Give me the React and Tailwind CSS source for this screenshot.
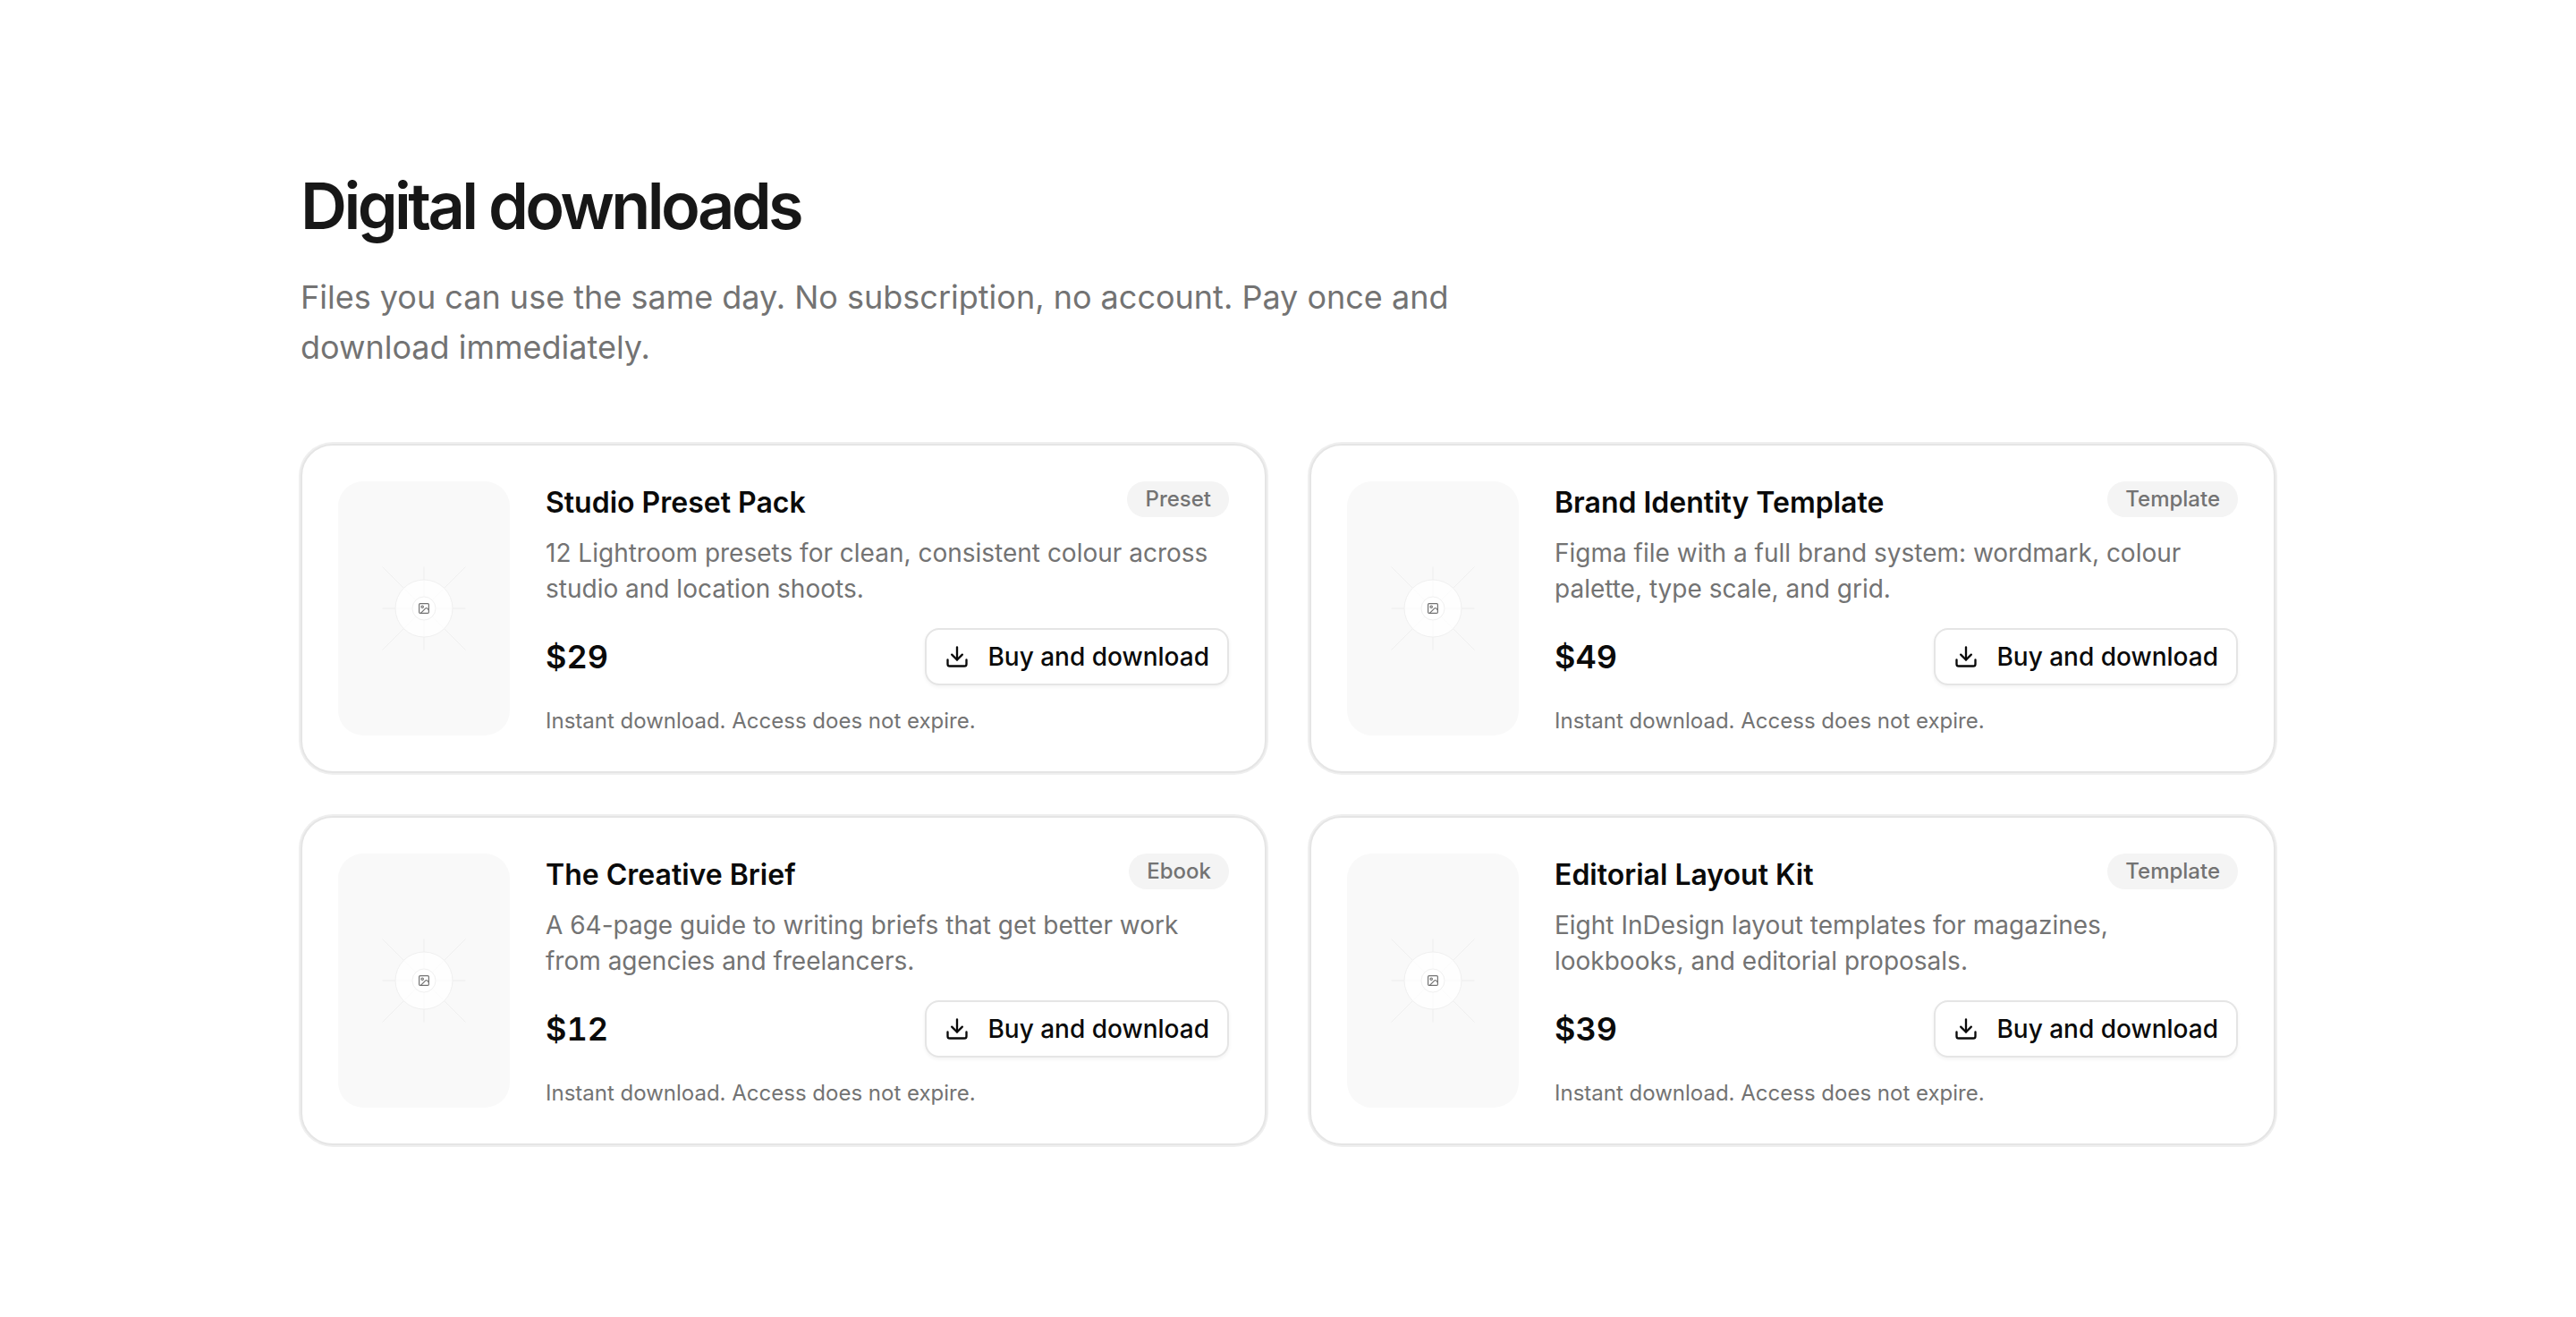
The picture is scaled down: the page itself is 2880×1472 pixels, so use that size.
import { Download } from "lucide-react";

const products = [
  {
    title: "Studio Preset Pack",
    kind: "Preset",
    text: "12 Lightroom presets for clean, consistent colour across studio and location shoots.",
    price: "$29",
  },
  {
    title: "Brand Identity Template",
    kind: "Template",
    text: "Figma file with a full brand system: wordmark, colour palette, type scale, and grid.",
    price: "$49",
  },
  {
    title: "The Creative Brief",
    kind: "Ebook",
    text: "A 64-page guide to writing briefs that get better work from agencies and freelancers.",
    price: "$12",
  },
  {
    title: "Editorial Layout Kit",
    kind: "Template",
    text: "Eight InDesign layout templates for magazines, lookbooks, and editorial proposals.",
    price: "$39",
  },
];

function Placeholder() {
  return (
    <div className="flex w-48 shrink-0 items-center justify-center rounded-[28px] bg-[#f9f9f9]">
      <svg width="94" height="94" viewBox="0 0 94 94" fill="none" aria-hidden="true">
        <path d="M47 0.5V93.5M0.5 47H93.5" stroke="#f3f3f3" strokeWidth="2" />
        <path d="M0.5 0.5L93.5 93.5M93.5 0.5L0.5 93.5" stroke="#efefef" strokeWidth="1" />
        <circle cx="47" cy="47" r="32" fill="#ffffff" fillOpacity="0.75" stroke="#f0f0f0" />
        <circle cx="47" cy="47" r="13" fill="#ffffff" stroke="#f0f0f0" />
        <g
          transform="translate(39.8 39.8) scale(0.6)"
          stroke="#737373"
          strokeWidth="2"
          strokeLinecap="round"
          strokeLinejoin="round"
        >
          <rect x="3" y="3" width="18" height="18" rx="2" />
          <circle cx="9" cy="9" r="2" />
          <path d="m21 15-3.086-3.086a2 2 0 0 0-2.828 0L6 21" />
        </g>
      </svg>
    </div>
  );
}

function ProductCard({ product }) {
  return (
    <article className="flex gap-10 rounded-[36px] border-2 border-[#e5e5e5] bg-white p-10 ring-2 ring-[#efefef]">
      <Placeholder />
      <div className="flex min-w-0 flex-1 flex-col">
        <div className="flex items-start justify-between gap-6">
          <h2 className="text-[32px] leading-[48px] font-semibold">{product.title}</h2>
          <span className="flex h-10 items-center rounded-full bg-[#f4f4f4] px-5 text-2xl leading-8 font-medium text-[#737373]">
            {product.kind}
          </span>
        </div>
        <p className="mt-3 text-[28px] leading-10 text-[#737373]">{product.text}</p>
        <div className="mt-6 flex items-center justify-between gap-6">
          <span className="text-4xl leading-[56px] font-semibold tabular-nums">{product.price}</span>
          <button
            type="button"
            className="flex h-16 items-center gap-5 rounded-2xl border-2 border-[#e5e5e5] bg-white px-5 text-[28px] leading-10 font-medium shadow-[0_2px_4px_rgba(0,0,0,0.05)]"
          >
            <Download size={28} strokeWidth={2} aria-hidden="true" />
            Buy and download
          </button>
        </div>
        <p className="mt-6 text-2xl leading-8 text-[#737373]">Instant download. Access does not expire.</p>
      </div>
    </article>
  );
}

export default function App() {
  return (
    <main className="min-h-screen bg-white py-48 font-['Inter',sans-serif] text-[#0a0a0a]">
      <section className="mx-auto w-full max-w-[2304px] px-12">
        <header className="max-w-[1344px]">
          <h1 className="text-7xl leading-[76px] font-semibold tracking-tighter text-[#171717]">Digital downloads</h1>
          <p className="mt-9 text-4xl leading-[56px] text-[#737373]">
            Files you can use the same day. No subscription, no account. Pay once and download immediately.
          </p>
        </header>
        <div className="mt-20 grid grid-cols-2 gap-12">
          {products.map((product) => (
            <ProductCard key={product.title} product={product} />
          ))}
        </div>
      </section>
    </main>
  );
}
